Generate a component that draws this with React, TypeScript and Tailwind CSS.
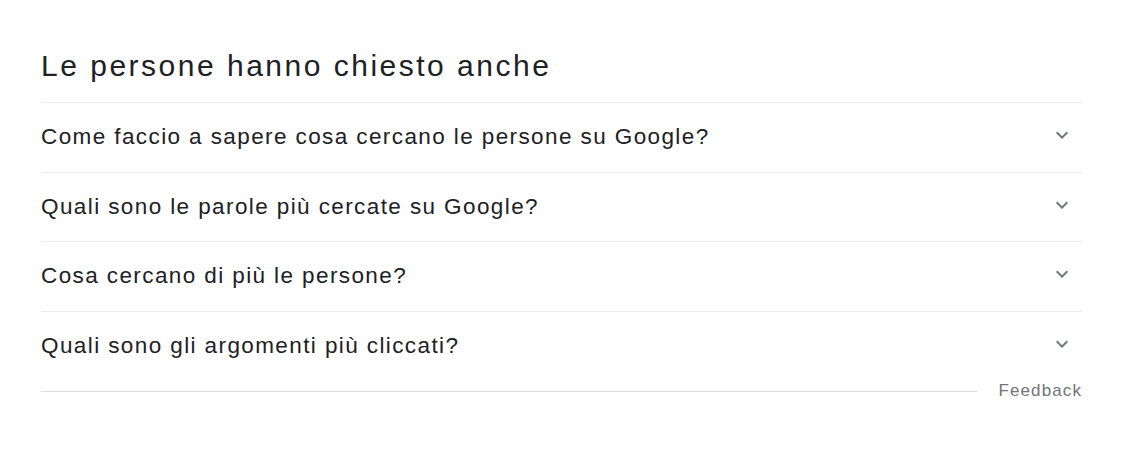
const questions = [
    'Come faccio a sapere cosa cercano le persone su Google?',
    'Quali sono le parole più cercate su Google?',
    'Cosa cercano di più le persone?',
    'Quali sono gli argomenti più cliccati?'
]

function Chevron() {
    return (
        <svg width="24" height="24" viewBox="0 0 24 24" className="text-[#70757a]">
            <path d="M7.41 8.59 12 13.17l4.59-4.58L18 10l-6 6-6-6 1.41-1.41z" fill="currentColor" />
        </svg>
    )
}

export default function App() {
    return (
        <div className="bg-white w-[1124px] h-[452px] pl-[41px] pr-[42px] pt-[48px] font-['Liberation_Sans',Arial,sans-serif]">
            {/* Heading */}
            <h2 className="text-[30px] leading-[36px] tracking-[2.5px] text-[#202124] pb-[18px] border-b border-[#ebebeb]">
                Le persone hanno chiesto anche
            </h2>

            {/* Question rows */}
            <div>
                {questions.map((q, i) => (
                    <div
                        key={i}
                        className={`flex items-center justify-between h-[69.5px] ${i < questions.length - 1 ? 'border-b border-[#ebebeb]' : ''}`}
                    >
                        <span className="text-[22.5px] tracking-[1.4px] text-[#202124]">{q}</span>
                        <span className="mr-[8px] mb-[4px]"><Chevron /></span>
                    </div>
                ))}
            </div>

            {/* Feedback */}
            <div className="flex items-center gap-[22px] h-[20px]">
                <div className="flex-1 border-t border-[#dadce0]" />
                <span className="text-[17px] tracking-[1.1px] text-[#70757a]">Feedback</span>
            </div>
        </div>
    )
}
